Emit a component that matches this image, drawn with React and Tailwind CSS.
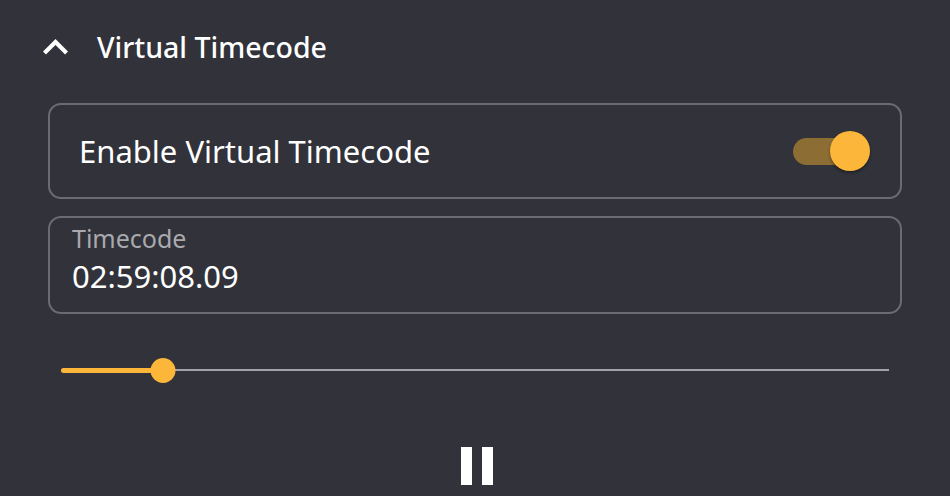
import React, { useState } from "react";

const Chevron = () => (
  <svg width="25" height="15.5" viewBox="6 8 12 7.41" className="text-white shrink-0">
    <path d="M7.41 15.41 12 10.83l4.59 4.58L18 14l-6-6-6 6z" fill="currentColor" />
  </svg>
);

const Toggle = ({ on, onChange }) => (
  <button
    onClick={() => onChange(!on)}
    className="relative w-[77px] h-[40px] flex items-center"
  >
    <span className="absolute left-0 w-[66px] h-[27px] rounded-full bg-[#8c6d33]" />
    <span
      className={
        "absolute w-[40px] h-[40px] rounded-full bg-[#fcb63a] shadow-[0_2px_3px_rgba(0,0,0,0.35)] " +
        (on ? "right-0" : "left-0")
      }
    />
  </button>
);

export default function App() {
  const [enabled, setEnabled] = useState(true);
  const progress = 12.3;

  return (
    <div className="w-[950px] h-[496px] bg-[#31323a] overflow-hidden font-['Noto_Sans','Open_Sans',sans-serif] text-white">
      <div className="flex items-center h-[94px] pl-[43px]">
        <Chevron />
        <span className="ml-[29px] text-[28.5px] font-medium">Virtual Timecode</span>
      </div>

      <div className="px-[48px] mt-[9px]">
        <div className="h-[96px] rounded-[13px] border-2 border-[#6b6c73] flex items-center justify-between pl-[29px] pr-[30px]">
          <span className="text-[31px]">Enable Virtual Timecode</span>
          <Toggle on={enabled} onChange={setEnabled} />
        </div>

        <div className="mt-[17px] h-[98px] rounded-[13px] border-2 border-[#6b6c73] pl-[22px] pt-[5px]">
          <div className="text-[25px] text-[#a9a9ae] leading-[30px]">Timecode</div>
          <div className="mt-[4px] text-[31px] leading-[38px]">02:59:08.09</div>
        </div>

        <div className="relative mx-[13px] mt-[44px] h-[24px] flex items-center">
          <div className="w-full h-[2px] bg-[#a3a3a9]" />
          <div
            className="absolute left-0 h-[5px] rounded-l-full bg-[#fcb63a]"
            style={{ width: `${progress}%` }}
          />
          <div
            className="absolute w-[25px] h-[25px] rounded-full bg-[#fcb63a] -translate-x-1/2"
            style={{ left: `${progress}%` }}
          />
        </div>

        <div className="flex justify-center mt-[65px] gap-[10px] pl-[4px]">
          <div className="w-[11px] h-[38px] bg-white" />
          <div className="w-[11px] h-[38px] bg-white" />
        </div>
      </div>
    </div>
  );
}
